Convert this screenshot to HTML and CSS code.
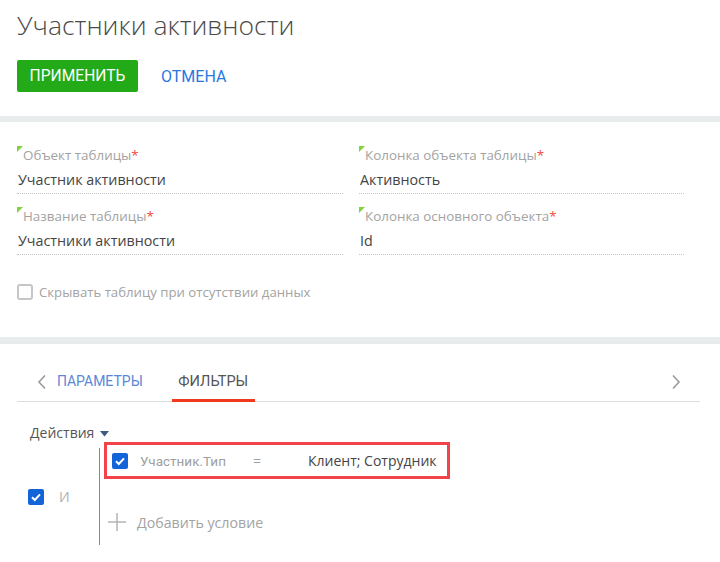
FILE: index.html
```html
<!DOCTYPE html>
<html lang="ru">
<head>
<meta charset="utf-8">
<link rel="stylesheet" href="styles.css">
</head>
<body>
<div class="page">
  <header class="header">
    <h1 class="title">Участники активности</h1>
    <div class="actions-bar">
      <button class="btn-apply">ПРИМЕНИТЬ</button>
      <button class="btn-cancel">ОТМЕНА</button>
    </div>
  </header>
  <div class="band"></div>
  <section class="fields">
    <div class="grid">
      <div class="field">
        <div class="label"><span class="tri"></span>Объект таблицы<span class="req">*</span></div>
        <div class="value">Участник активности</div>
      </div>
      <div class="field">
        <div class="label"><span class="tri"></span>Колонка объекта таблицы<span class="req">*</span></div>
        <div class="value">Активность</div>
      </div>
      <div class="field">
        <div class="label"><span class="tri"></span>Название таблицы<span class="req">*</span></div>
        <div class="value">Участники активности</div>
      </div>
      <div class="field">
        <div class="label"><span class="tri"></span>Колонка основного объекта<span class="req">*</span></div>
        <div class="value">Id</div>
      </div>
    </div>
    <label class="hide-row"><span class="box"></span>Скрывать таблицу при отсутствии данных</label>
  </section>
  <div class="band band-2"></div>
  <section class="tabs-section">
    <div class="tabbar">
      <svg class="chev" width="10" height="16" viewBox="0 0 10 16"><path d="M8 1.5 L2 8 L8 14.5" fill="none" stroke="#9a9a9a" stroke-width="1.6"/></svg>
      <span class="tab tab-link">ПАРАМЕТРЫ</span>
      <span class="tab tab-active">ФИЛЬТРЫ</span>
      <span class="spacer"></span>
      <svg class="chev chev-r" width="10" height="16" viewBox="0 0 10 16"><path d="M2 1.5 L8 8 L2 14.5" fill="none" stroke="#9a9a9a" stroke-width="1.6"/></svg>
    </div>
    <div class="dropdown">Действия <svg class="caret" width="9" height="6" viewBox="0 0 9 6"><path d="M0 0 H9 L4.5 5.5 Z" fill="#3d5a80"/></svg></div>
    <div class="group">
      <div class="group-left">
        <svg class="cb" width="16" height="16" viewBox="0 0 16 16"><rect x="0" y="0" width="16" height="16" rx="2" fill="#1264d8"/><path d="M4 8.3 L6.8 11 L12 5.3" fill="none" stroke="#fff" stroke-width="2"/></svg>
        <span class="and">И</span>
      </div>
      <div class="group-right">
        <div class="cond">
          <svg class="cb" width="16" height="16" viewBox="0 0 16 16"><rect x="0" y="0" width="16" height="16" rx="2" fill="#1264d8"/><path d="M4 8.3 L6.8 11 L12 5.3" fill="none" stroke="#fff" stroke-width="2"/></svg>
          <span class="cond-col">Участник.Тип</span>
          <span class="cond-op">=</span>
          <span class="cond-val">Клиент; Сотрудник</span>
        </div>
        <div class="add">
          <svg class="plus" width="18" height="18" viewBox="0 0 18 18"><path d="M9 0 V18 M0 9 H18" stroke="#b5b5b5" stroke-width="1.5"/></svg>
          <span>Добавить условие</span>
        </div>
      </div>
    </div>
  </section>
</div>
</body>
</html>
```
FILE: styles.css
```css
* { box-sizing: border-box; }
html, body { margin: 0; padding: 0; background: #fff; }
body { font-family: "Open Sans", "Liberation Sans", sans-serif; color: #444; width: 720px; height: 562px; overflow: hidden; }

.header { padding: 8px 17px 24px; }
.title { margin: 0; font-weight: 300; font-size: 26.5px; line-height: 35px; color: #4a4a4a; letter-spacing: 0; }
.actions-bar { display: flex; align-items: center; margin-top: 17px; gap: 23px; }
.btn-apply { height: 32px; padding: 0; border: 0; border-radius: 2px; background: #22aa19; color: #fff; font-family: Roboto, "Liberation Sans", sans-serif; font-size: 15.6px; font-weight: 400; width: 121px; }
.btn-cancel { height: 32px; padding: 0; border: 0; background: none; color: #2679e0; font-family: Roboto, "Liberation Sans", sans-serif; font-size: 16px; }

.band { height: 6px; background: #e9ecec; }
.band-2 { height: 7px; }

.fields { height: 215px; padding: 24px 0 0 17px; }
.grid { display: grid; grid-template-columns: 326px 325px; column-gap: 16px; row-gap: 13px; }
.label { position: relative; font-size: 13.4px; line-height: 18px; color: #a3a3a3; padding-left: 6px; }
.tri { position: absolute; left: 0; top: 0; width: 0; height: 0; border-top: 6px solid #7fd43b; border-right: 6px solid transparent; }
.req { color: #f04a3e; }
.value { margin-top: 4px; font-size: 14.3px; line-height: 24px; color: #444; padding-left: 1px; padding-bottom: 1px; border-bottom: 1px dotted #c6c6c6; height: 26px; }
.hide-row { display: flex; align-items: center; gap: 6px; margin-top: 28px; font-size: 13.2px; line-height: 18px; color: #a3a3a3; }
.box { width: 16px; height: 16px; border: 2px solid #c6c6c6; border-radius: 3px; }

.tabs-section { padding: 20px 0 0; }
.tabbar { display: flex; align-items: stretch; height: 38px; margin: 0 20px 0 17px; border-bottom: 1px solid #dcdcdc; }
.chev { align-self: center; margin: 0 0 2px 20px; }
.chev-r { margin: 0 19px 2px 0; }
.tab { display: flex; align-items: center; padding: 0 7px 2px; font-family: Roboto, "Liberation Sans", sans-serif; font-size: 14px; margin-bottom: -1px; border-bottom: 3px solid transparent; }
.tab-link { color: #5b87d8; margin-left: 3px; }
.tab-active { color: #555; margin-left: 22px; padding: 0 8px 2px; font-size: 14.6px; width: 83px; justify-content: center; border-bottom-color: #f0391f; }
.spacer { flex: 1; }

.dropdown { display: flex; align-items: center; gap: 6px; margin: 22px 0 0 30px; font-size: 14px; line-height: 18px; color: #555; height: 18px; }
.caret { margin-top: 1px; }

.group { display: flex; margin-top: 6px; }
.group-left { width: 99px; padding-left: 28px; display: flex; align-items: center; gap: 15px; }
.and { font-size: 14px; color: #b0b0b0; }
.group-right { border-left: 1px solid #2ea3dd; height: 97px; padding: 0 0 0 7px; }
.cond { display: flex; align-items: center; width: 340px; height: 31px; margin-top: -3px; padding-left: 5px; outline: 3px solid #f2434a; font-size: 14px; }
.cond-col { margin-left: 12px; color: #a0a0a0; width: 113px; font-size: 13.5px; font-family: Roboto, "Open Sans", sans-serif; }
.cond-op { color: #a0a0a0; width: 55px; }
.cond-val { color: #444; }
.add { display: flex; align-items: center; gap: 11px; margin-top: 34px; margin-left: 1px; height: 24px; font-size: 14.2px; color: #a3a3a3; }
```
